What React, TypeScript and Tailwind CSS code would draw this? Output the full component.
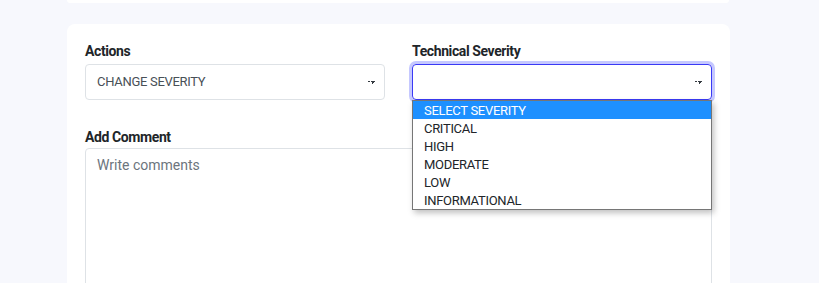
import React from 'react';

const options = ['SELECT SEVERITY', 'CRITICAL', 'HIGH', 'MODERATE', 'LOW', 'INFORMATIONAL'];

function Chevron() {
  return (
    <svg width="7" height="3" viewBox="0 0 7 3" className="shrink-0">
      <path d="M0 0h2v1H0z M3 0h4v1H6v1H5v1H4V1H3z" fill="#343a40" />
    </svg>
  );
}

export default function App() {
  return (
    <div className="h-[283px] w-[819px] overflow-hidden bg-[#f7f8fd] font-['Roboto',sans-serif]">
      <div className="ml-[67px] w-[662px] h-[3px] bg-white rounded-b-lg" />
      <div className="ml-[67px] mt-[21px] w-[663px] h-[300px] bg-white rounded-lg px-[18px] pt-[17px]">
        <div className="grid grid-cols-2 gap-[27px]">
          <div>
            <div className="text-[14px] leading-[21px] font-bold tracking-[-0.4px] text-[#212529]">Actions</div>
            <div className="mt-[2px] h-[36px] border border-[#dee2e6] rounded-[4px] flex items-center justify-between pl-[11px] pr-[9px]">
              <span className="text-[13px] tracking-[-0.3px] text-[#495057]">CHANGE SEVERITY</span>
              <Chevron />
            </div>
          </div>
          <div className="relative">
            <div className="text-[14px] leading-[21px] font-bold tracking-[-0.4px] text-[#212529]">Technical Severity</div>
            <div className="mt-[2px] h-[36px] border border-[#3a3af5] rounded-[4px] ring-[3px] ring-[#c5c8ff] flex items-center justify-end pr-[9px]">
              <Chevron />
            </div>
            <div className="absolute left-0 right-0 top-[59px] border border-[#767676] bg-white shadow-[2px_3px_6px_rgba(0,0,0,0.25)] z-10">
              {options.map((o, i) => (
                <div
                  key={o}
                  className={`h-[18px] leading-[20px] overflow-hidden pl-[11px] text-[13px] tracking-[-0.3px] ${i === 0 ? 'bg-[#1e90ff] text-white' : 'text-[#212529]'}`}
                >
                  {o}
                </div>
              ))}
            </div>
          </div>
        </div>
        <div className="mt-[27px] text-[14px] leading-[21px] font-bold tracking-[-0.4px] text-[#212529]">Add Comment</div>
        <div className="h-[200px] border border-[#dee2e6] rounded-[4px] px-[11px] pt-[4px]">
          <span className="text-[14px] text-[#6c757d]">Write comments</span>
        </div>
      </div>
    </div>
  );
}
